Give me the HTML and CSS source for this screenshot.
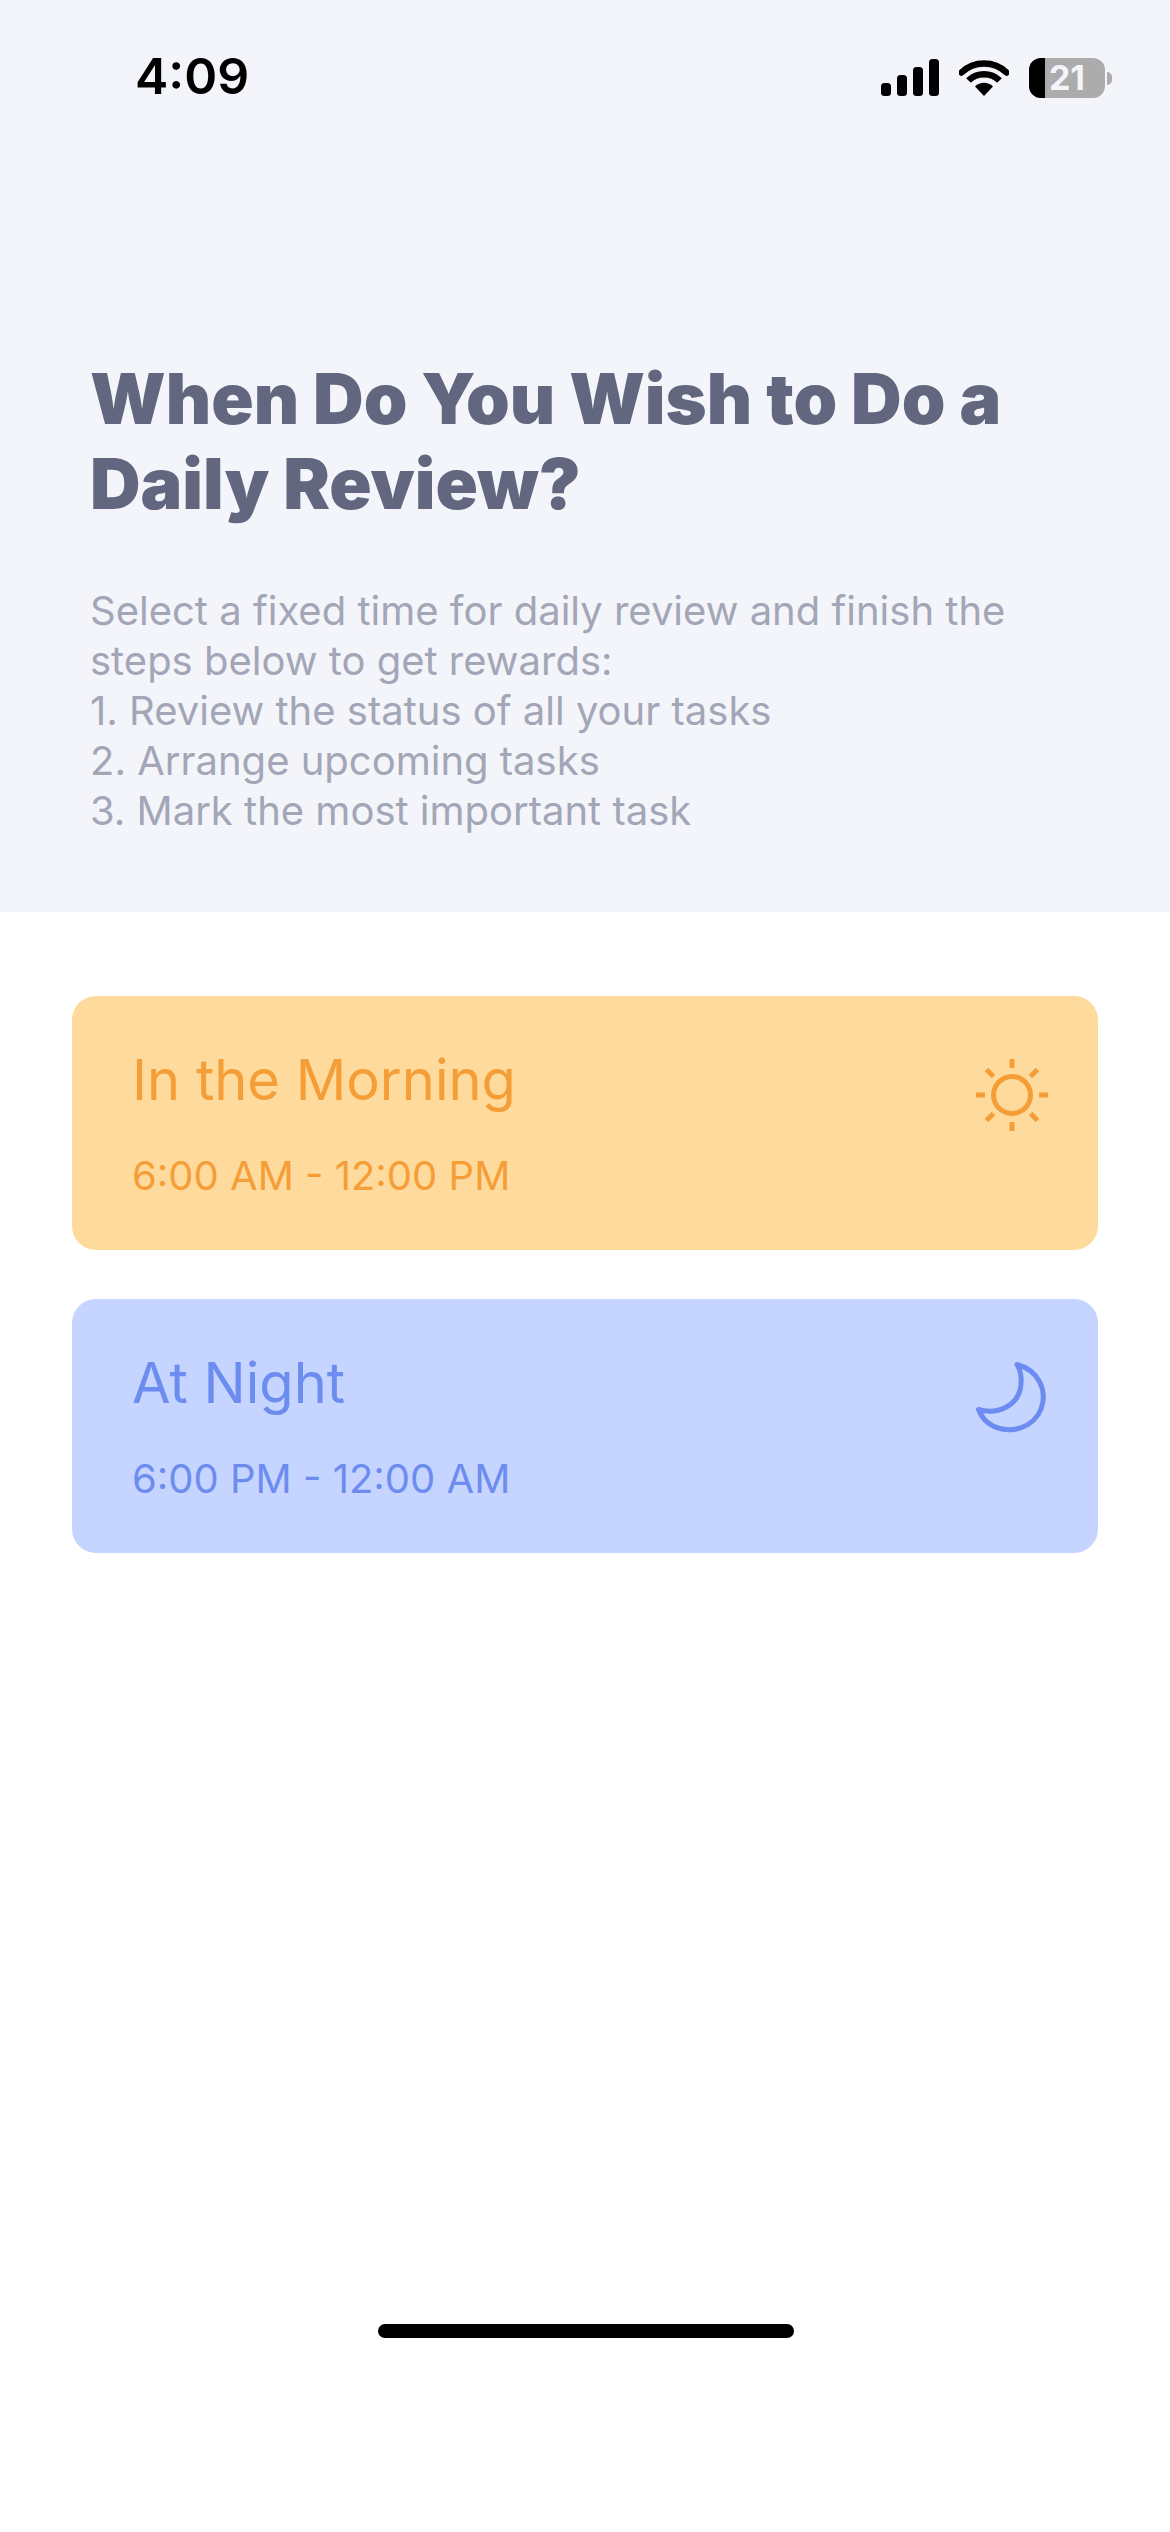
FILE: index.html
```html
<!DOCTYPE html>
<html lang="en">
<head>
<meta charset="utf-8">
<title>Daily Review</title>
<link rel="stylesheet" href="styles.css">
</head>
<body>
<header class="hero">
  <div class="status">
    <span class="time">4:09</span>
    <div class="status-icons">
      <svg class="signal" width="58" height="38" viewBox="0 0 58 38"><rect x="0" y="24" width="10" height="13" rx="3.5"/><rect x="16" y="16" width="10" height="21" rx="3.5"/><rect x="32" y="8" width="10" height="29" rx="3.5"/><rect x="48" y="0" width="10" height="37" rx="3.5"/></svg>
      <svg class="wifi" width="50" height="38" viewBox="0 0 50 38"><path d="M25 37 16 27.500C21 22.500 29 22.500 34 27.500Z"/><path d="M9.500 21.500C18 13 32 13 40.500 21.500" fill="none" stroke="#000" stroke-width="6.500"/><path d="M2.500 13.500C15 1.500 35 1.500 47.500 13.500" fill="none" stroke="#000" stroke-width="6.500" stroke-linecap="round"/></svg>
      <div class="battery">
        <div class="battery-body"><div class="battery-fill"></div><span class="battery-num">21</span></div>
        <span class="battery-cap"></span>
      </div>
    </div>
  </div>
  <h1 class="title">When Do You Wish to Do a<br>Daily Review?</h1>
  <p class="intro">Select a fixed time for daily review and finish the<br>steps below to get rewards:<br>1. Review the status of all your tasks<br>2. Arrange upcoming tasks<br>3. Mark the most important task</p>
</header>
<main class="options">
  <section class="card card-morning">
    <div class="card-text">
      <h2 class="card-title">In the Morning</h2>
      <p class="card-time">6:00 AM - 12:00 PM</p>
    </div>
    <svg class="card-icon" width="72" height="72" viewBox="0 0 72 72" fill="none" stroke="#f59e38" stroke-width="5">
      <circle cx="36" cy="36" r="18.500"/>
      <path d="M36 0V9M36 63V72M0 36H9M63 36H72M10.500 10.500 17.500 17.500M54.500 54.500 61.500 61.500M10.500 61.500 17.500 54.500M54.500 17.500 61.500 10.500"/>
    </svg>
  </section>
  <section class="card card-night">
    <div class="card-text">
      <h2 class="card-title">At Night</h2>
      <p class="card-time">6:00 PM - 12:00 AM</p>
    </div>
    <svg class="card-icon" width="72" height="72" viewBox="0 0 72 72" fill="none" stroke="#6c8cf0" stroke-width="5" stroke-linejoin="round">
      <path d="M41 2.500C62 8 72 28 65 47C58 65 35 73 17 64C10 60.500 5 54 2.500 47.500C22 53 41 44 44.500 26C46 17 45 9 41 2.500Z"/>
    </svg>
  </section>
</main>
<div class="home-indicator"></div>
</body>
</html>
```
FILE: styles.css
```css
* { box-sizing: border-box; }
html, body { margin: 0; padding: 0; }
body {
  width: 1170px;
  height: 2532px;
  background: #fff;
  font-family: Inter, "Liberation Sans", sans-serif;
  display: flex;
  flex-direction: column;
  overflow: hidden;
}
.hero {
  height: 912px;
  background: #f3f5fa;
  padding: 0 72px 0 90px;
  flex: none;
}
.status {
  height: 156px;
  margin-left: 45px;
  margin-right: -14px;
  padding-top: 46px;
  display: flex;
  justify-content: space-between;
  align-items: flex-start;
}
.time { font-size: 50px; line-height: 60px; font-weight: 600; color: #000; }
.status-icons { display: flex; align-items: center; gap: 20px; padding-top: 12px; }
.battery { display: flex; align-items: center; gap: 2px; }
.battery-body {
  position: relative;
  width: 76px;
  height: 40px;
  border-radius: 12px;
  background: #acacac;
  overflow: hidden;
  display: flex;
  align-items: center;
  justify-content: center;
}
.battery-fill { position: absolute; left: 0; top: 0; bottom: 0; width: 16px; background: #000; }
.battery-num { position: relative; color: #f3f5fa; font-size: 34px; font-weight: 700; line-height: 40px; }
.battery-cap { width: 5px; height: 13px; border-radius: 0 6px 6px 0; background: #acacac; }
.title {
  margin: 200px 0 0;
  font-size: 70px;
  line-height: 85px;
  font-weight: 900;
  color: #62677f;
}
.intro {
  margin: 60px 0 0;
  font-size: 40px;
  line-height: 50px;
  font-weight: 400;
  color: #a3a6b6;
}
.options {
  display: flex;
  flex-direction: column;
  gap: 49px;
  padding: 84px 72px 0;
}
.card {
  height: 254px;
  border-radius: 24px;
  padding: 52px 50px 0 60px;
  display: flex;
  justify-content: space-between;
  align-items: flex-start;
}
.card-morning { background: #fedb9c; color: #f59e38; }
.card-night { background: #c6d5ff; color: #6c8cf0; }
.card-title { margin: 0; font-size: 56px; line-height: 64px; font-weight: 400; }
.card-time { margin: 40px 0 0; font-size: 40px; line-height: 48px; font-weight: 400; }
.card-icon { margin-top: 11px; }
.home-indicator {
  position: absolute;
  left: 378px;
  top: 2324px;
  width: 416px;
  height: 14px;
  border-radius: 7px;
  background: #000;
}
```
